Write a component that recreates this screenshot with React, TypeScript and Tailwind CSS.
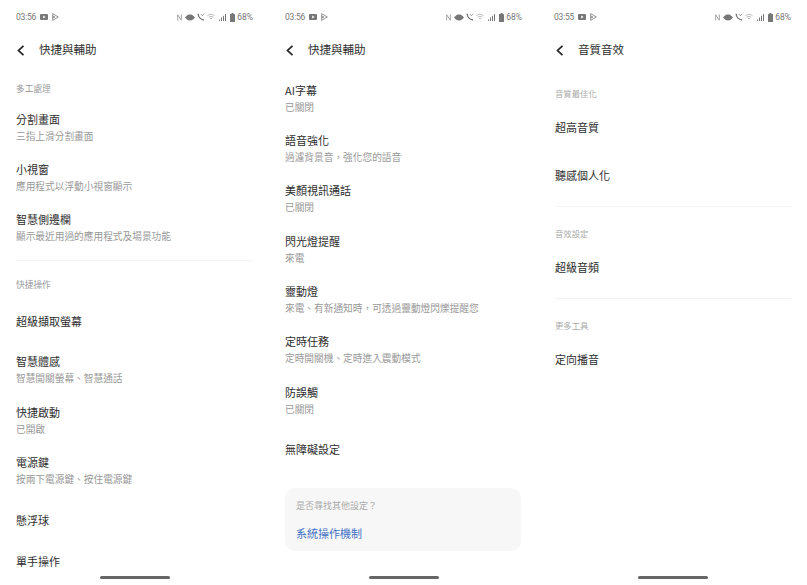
const FONT = "font-['Noto_Sans_CJK_TC','Noto_Sans',sans-serif]"

function StatusIcons() {
  return (
    <div className="flex items-center text-[#777]">
      {/* NFC */}
      <svg width="5" height="7" viewBox="0 0 5 7" fill="none" stroke="#999" strokeWidth="0.9">
        <path d="M.7 6.500V.8l3.600 5.400V.5" />
      </svg>
      {/* Eye */}
      <svg width="10" height="7" viewBox="0 0 10 7" fill="currentColor" className="ml-[3px]">
        <path d="M0 3.500C2 1 3.500.6 5 .6S8 1 10 3.500C8 6 6.500 6.400 5 6.400S2 6 0 3.500Z" />
      </svg>
      {/* Wifi calling */}
      <svg width="8" height="8" viewBox="0 0 8 8" fill="none" stroke="currentColor" strokeWidth="1.400" className="ml-[2px]">
        <path d="M1.200.8c0 3 2.300 5.800 5.800 6.200" />
        <path d="M3.800 1.200l1.500 1.500L7 .8" strokeWidth="0.8" />
      </svg>
      {/* Wifi */}
      <svg width="8" height="8" viewBox="0 0 9 8" fill="none" stroke="#aaa" strokeWidth="0.9" className="ml-[2px]">
        <path d="M.5 2.500C3 .5 6 .5 8.500 2.500M2 4.200c1.500-1 3.500-1 5 0M3.400 5.800c.7-.4 1.500-.4 2.200 0" />
      </svg>
      {/* Signal */}
      <svg width="7" height="7" viewBox="0 0 7 7" fill="currentColor" className="ml-[4.500px]">
        <rect x="0" y="5.500" width="1" height="1.500" />
        <rect x="2" y="3.500" width="1" height="3.500" />
        <rect x="4" y="1.800" width="1" height="5.200" />
        <rect x="6" y="0" width="1" height="7" />
      </svg>
      {/* Battery */}
      <svg width="5" height="9" viewBox="0 0 5 9" fill="currentColor" className="ml-[3.500px]">
        <rect x="1.500" y="0" width="2" height="1" />
        <rect x="0" y="1" width="5" height="8" rx="0.600" />
      </svg>
      <span className="ml-[2.500px] font-['Roboto',sans-serif] text-[8.500px] leading-none text-[#777]">68%</span>
    </div>
  )
}

function StatusBar({ time }: { time: string }) {
  return (
    <div className="flex h-[34px] items-center justify-between">
      <div className="flex items-center text-[#777]">
        <span className="font-['Roboto',sans-serif] text-[8.500px] leading-none tracking-[-0.2px]">{time}</span>
        <svg width="8" height="6" viewBox="0 0 8 6" fill="currentColor" className="ml-[4px]">
          <path fillRule="evenodd" d="M1 0h6a1 1 0 0 1 1 1v4a1 1 0 0 1-1 1H1a1 1 0 0 1-1-1V1a1 1 0 0 1 1-1Zm2.200 1.600v2.800L5.600 3Z" />
        </svg>
        <svg width="7" height="8" viewBox="0 0 7 8" fill="none" stroke="currentColor" strokeWidth="0.8" className="ml-[4px]">
          <path d="M.7.6v6.800L6.300 4Z" />
          <path d="M.7 3 3 4 .7 5" />
        </svg>
      </div>
      <StatusIcons />
    </div>
  )
}

function Header({ title }: { title: string }) {
  return (
    <div className="flex h-[31px] items-center pt-[1px]">
      <svg width="8" height="11" viewBox="0 0 8 11" fill="none" stroke="#222" strokeWidth="1.700" className="ml-px">
        <path d="M6.500.8 1.500 5.500l5 4.700" />
      </svg>
      <span className="ml-[14px] text-[11.500px] leading-none text-[#2e2e2e]">{title}</span>
    </div>
  )
}

function Section({ label, className }: { label: string; className: string }) {
  return <div className={`text-[8.700px] leading-[17px] text-[#999] ${className}`}>{label}</div>
}

function Row({ title, sub, className = '' }: { title: string; sub?: string; className?: string }) {
  return (
    <div className={className}>
      <div className="text-[11px] leading-[17px] text-[#2e2e2e]">{title}</div>
      {sub && <div className="text-[9.700px] leading-[17px] text-[#999]">{sub}</div>}
    </div>
  )
}

function HomeBar() {
  return (
    <div className="absolute bottom-[6px] left-0 right-0 flex justify-center">
      <div className="h-[3px] w-[70px] rounded-full bg-[#666]" />
    </div>
  )
}

export default function App() {
  return (
    <div className={`grid h-[585px] w-[807px] grid-cols-3 overflow-hidden bg-white ${FONT}`}>
      {/* Left: multitasking + shortcuts */}
      <div className="relative overflow-hidden pl-4 pr-4">
        <StatusBar time="03:56" />
        <Header title="快捷與輔助" />
        <Section label="多工處理" className="mt-[15px]" />
        <Row title="分割畫面" sub="三指上滑分割畫面" className="mt-[14px]" />
        <Row title="小視窗" sub="應用程式以浮動小視窗顯示" className="mt-4" />
        <Row title="智慧側邊欄" sub="顯示最近用過的應用程式及場景功能" className="mt-4" />
        <div className="mt-[15px] h-px bg-[#f2f2f2]" />
        <Section label="快捷操作" className="mt-[15px]" />
        <Row title="超級擷取螢幕" className="mt-5" />
        <Row title="智慧體感" sub="智慧開關螢幕、智慧通話" className="mt-[23px]" />
        <Row title="快捷啟動" sub="已開啟" className="mt-[17px]" />
        <Row title="電源鍵" sub="按兩下電源鍵、按住電源鍵" className="mt-4" />
        <Row title="懸浮球" className="mt-6" />
        <Row title="單手操作" className="mt-6" />
        <HomeBar />
      </div>

      {/* Middle: accessibility list */}
      <div className="relative overflow-hidden pl-4 pr-4">
        <StatusBar time="03:56" />
        <Header title="快捷與輔助" />
        <Row title="AI字幕" sub="已關閉" className="mt-[17px]" />
        <Row title="語音強化" sub="過濾背景音，強化您的語音" className="mt-4" />
        <Row title="美顏視訊通話" sub="已關閉" className="mt-4" />
        <Row title="閃光燈提醒" sub="來電" className="mt-[17px]" />
        <Row title="靈動燈" sub="來電、有新通知時，可透過靈動燈閃爍提醒您" className="mt-4" />
        <Row title="定時任務" sub="定時開關機、定時進入震動模式" className="mt-4" />
        <Row title="防誤觸" sub="已關閉" className="mt-[17px]" />
        <Row title="無障礙設定" className="mt-[23px]" />
        <div className="mr-px mt-[30px] h-[63px] rounded-[10px] bg-[#f7f7f7] px-[11px] pt-[9px]">
          <div className="text-[9px] leading-[17px] text-[#aaa]">是否尋找其他設定？</div>
          <div className="mt-[11px] text-[11px] leading-[17px] text-[#3f6fc4]">系統操作機制</div>
        </div>
        <HomeBar />
      </div>

      {/* Right: sound effects */}
      <div className="relative overflow-hidden pl-4 pr-4">
        <StatusBar time="03:55" />
        <div className="pl-[1px]">
          <Header title="音質音效" />
          <div className="mt-[20px] text-[8.400px] leading-[17px] text-[#aaa]">音質最佳化</div>
          <Row title="超高音質" className="mt-[17px]" />
          <Row title="聽感個人化" className="mt-[31px]" />
          <div className="mt-[22px] h-px bg-[#f2f2f2]" />
          <div className="mt-[18px] text-[8.400px] leading-[17px] text-[#aaa]">音效設定</div>
          <Row title="超級音頻" className="mt-[17px]" />
          <div className="mt-[22px] h-px bg-[#f2f2f2]" />
          <div className="mt-[18px] text-[8.400px] leading-[17px] text-[#aaa]">更多工具</div>
          <Row title="定向播音" className="mt-[17px]" />
        </div>
        <HomeBar />
      </div>
    </div>
  )
}
